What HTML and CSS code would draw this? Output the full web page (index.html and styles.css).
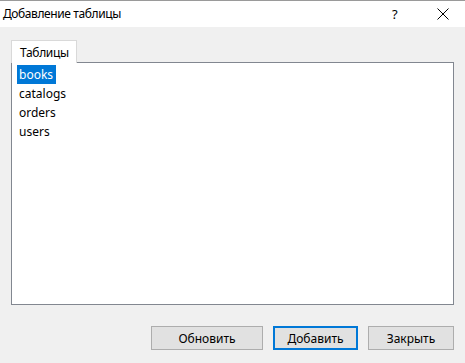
FILE: index.html
```html
<!DOCTYPE html>
<html>

<head>
    <meta charset="UTF-8">
    <title>Добавление таблицы</title>
    <link rel="stylesheet" href="styles.css">
</head>

<body>
    <div class="dialog">
        <div class="titlebar">
            <span class="title">Добавление таблицы</span>
            <span class="help">?</span>
            <span class="close">
                <svg width="12" height="12" viewBox="0 0 12 12">
                    <path d="M0.5 0.5L11.5 11.5M11.5 0.5L0.5 11.5" stroke="#000" stroke-width="1" fill="none" />
                </svg>
            </span>
        </div>
        <div class="content">
            <div class="tabs">
                <div class="tab">Таблицы</div>
            </div>
            <ul class="list">
                <li><span class="selected">books</span></li>
                <li><span>catalogs</span></li>
                <li><span>orders</span></li>
                <li><span>users</span></li>
            </ul>
            <div class="buttons">
                <button class="btn btn-wide">Обновить</button>
                <button class="btn btn-default">Добавить</button>
                <button class="btn">Закрыть</button>
            </div>
        </div>
    </div>
</body>

</html>
```

FILE: styles.css
```css
* {
    box-sizing: border-box;
}

body {
    margin: 0;
    background: #f0f0f0;
    font-family: "Noto Sans", "Open Sans", sans-serif;
    font-size: 12px;
    color: #000;
}

.dialog {
    width: 465px;
    height: 363px;
}

.titlebar {
    height: 27px;
    background: #fff;
    border-top: 1px solid #9a9a9a;
    display: flex;
    align-items: center;
}

.title {
    flex: 1;
    padding-left: 3px;
    padding-bottom: 1px;
    letter-spacing: -0.4px;
}

.help {
    width: 12px;
    margin-right: 33px;
    font-size: 13px;
}

.close {
    width: 12px;
    height: 12px;
    margin-right: 16px;
    display: flex;
}

.content {
    padding: 13px 11px 0 11px;
}

.tabs {
    display: flex;
}

.tab {
    width: 66px;
    height: 23px;
    background: #fff;
    border: 1px solid #d9d9d9;
    border-bottom: none;
    padding: 3px 0 0 8px;
    margin-bottom: -1px;
    letter-spacing: -0.3px;
    position: relative;
}

.list {
    list-style-type: none;
    margin: 0;
    height: 243px;
    background: #fff;
    border: 1px solid #828790;
    padding: 2px 0 0 5px;
}

.list>li {
    height: 19px;
    line-height: 19px;
}

.list>li>span {
    display: inline-block;
    padding: 0 3px 0 2px;
}

.list .selected {
    background: #0078d7;
    color: #fff;
}

.buttons {
    display: flex;
    justify-content: flex-end;
    gap: 10px;
    margin-top: 21px;
}

.btn {
    width: 86px;
    height: 24px;
    background: #e1e1e1;
    border: 1px solid #adadad;
    font-family: inherit;
    font-size: 12px;
    color: #000;
    padding: 0;
}

.btn-wide {
    width: 112px;
}

.btn-default {
    width: 85px;
    border: 2px solid #0078d7;
}
```
